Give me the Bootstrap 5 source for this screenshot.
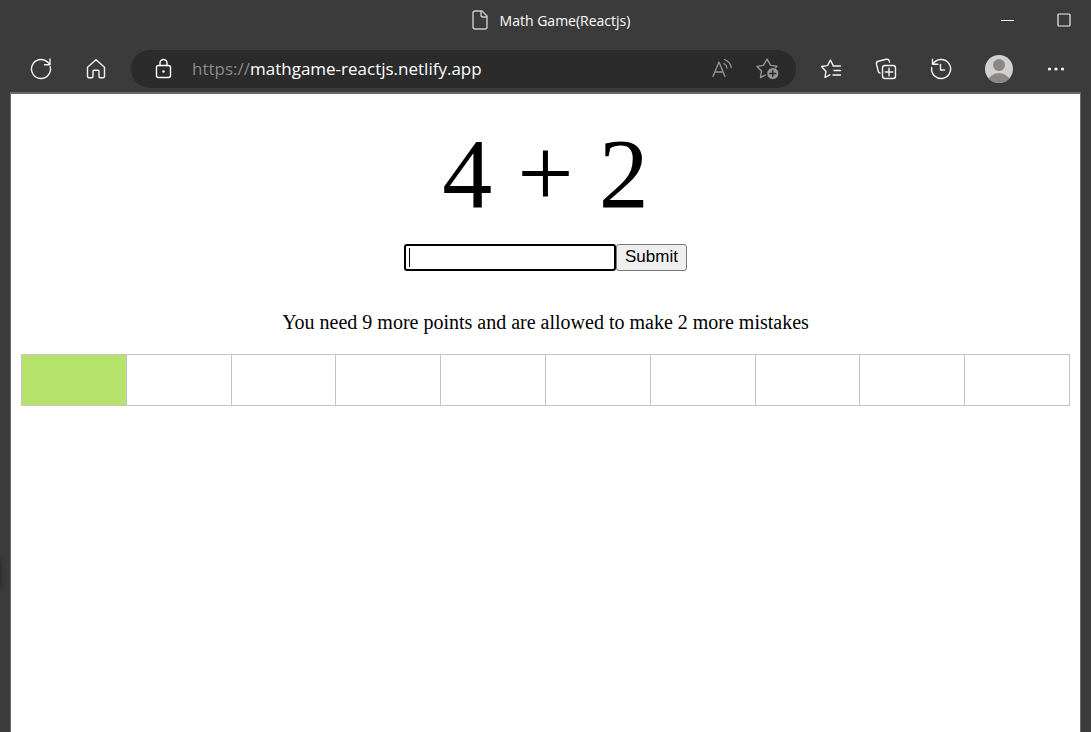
<!DOCTYPE html>
<html lang="en">
<head>
<meta charset="utf-8">
<meta name="viewport" content="width=device-width, initial-scale=1">
<title>Math Game(Reactjs)</title>
<link href="https://cdn.jsdelivr.net/npm/bootstrap@5.3.0/dist/css/bootstrap.min.css" rel="stylesheet">
<style>
  body { background: #3b3b3b; color: #fff; font-family: "Open Sans", "Noto Sans", sans-serif; }
  svg { display: block; fill: none; stroke: currentColor; stroke-width: 1.4; stroke-linecap: round; stroke-linejoin: round; }
  .title-bar { height: 40px; padding-right: 20px; }
  .title-text { font-size: 14px; gap: 12px; padding-left: 31px; }
  .page-icon { color: #ccc; }
  .window-buttons { gap: 42px; }
  .tool-bar { height: 52px; padding: 6px 21px 0 26px; }
  .tool-group { gap: 25px; }
  .tool-button { width: 30px; height: 30px; padding: 0; border: 0; background: none; color: #f2f2f2; display: flex; align-items: center; justify-content: center; }
  .profile { width: 36px; }
  .menu-dots { width: 28px; }
  .address { height: 38px; margin: 0 20px; padding: 0 13px 0 22px; background: #2b2b2b; }
  .address a { font-size: 17px; color: #fff; margin-left: 18px; }
  .address .scheme { color: #8a8a8a; }
  .address .tool-button { color: #969696; }
  .viewport { margin: 0 10px; border: 1px solid #6b6969; border-top-width: 2px; border-bottom: 0; background: #fff; color: #000; padding: 20px 10px; font-family: "Liberation Serif", "Times New Roman", serif; }
  .problem { font-size: 100px; line-height: 120px; }
  .answer-form { margin: 10px 0 36px; font-family: "Liberation Sans", Arial, sans-serif; font-size: 17px; }
  .answer { width: 212px; height: 27px; padding: 2px 4px; border: 2px solid #000; border-radius: 3px; outline: 0; }
  .caret { position: absolute; left: 5px; top: 4px; width: 1px; height: 19px; background: #000; }
  .submit { height: 27px; padding: 0 8px 2px; line-height: 23px; border: 1px solid #767676; border-radius: 3px; background: #efefef; color: #000; }
  .message { font-size: 20px; line-height: 30px; margin-bottom: 17px; }
  .steps { height: 52px; border: 1px solid #c3c3c3; }
  .step + .step { border-left: 1px solid #c3c3c3; }
  .step.done { background: #b5e36b; }
  .edge-shadow { position: absolute; left: -4px; top: 560px; width: 4px; height: 28px; box-shadow: 0 0 5px 0 #222; }
</style>
</head>
<body>
<div class="d-flex flex-column min-vh-100 position-relative overflow-hidden">
  <header>
    <div class="title-bar d-flex align-items-center">
      <div class="col"></div>
      <div class="title-text d-flex align-items-center text-nowrap">
        <svg class="page-icon" width="16" height="20" viewBox="0 0 16 20"><path d="M3 1h7l5 5v11a2 2 0 0 1-2 2H3a2 2 0 0 1-2-2V3a2 2 0 0 1 2-2zM9 1v4a2 2 0 0 0 2 2h4"/></svg>
        <span>Math Game(Reactjs)</span>
      </div>
      <div class="window-buttons col d-flex justify-content-end">
        <button class="tool-button w-auto" aria-label="Minimize"><svg width="15" height="15" viewBox="0 0 15 15"><path d="M1 7.500h13" stroke-width="1" stroke-linecap="butt"/></svg></button>
        <button class="tool-button w-auto" aria-label="Maximize"><svg width="14" height="14" viewBox="0 0 14 14"><rect x="1" y="1" width="12" height="12" rx="1" stroke-width="1.200"/></svg></button>
      </div>
    </div>
    <div class="tool-bar d-flex align-items-center">
      <div class="tool-group d-flex">
        <button class="tool-button" aria-label="Refresh"><svg width="24" height="24" viewBox="0 0 24 24"><path d="M21.200 9.600A9.500 9.500 0 1 1 18 4.600l3 3M21 2v5.700h-5.500"/></svg></button>
        <button class="tool-button" aria-label="Home"><svg width="22" height="22" viewBox="0 0 22 22"><path d="M2.500 9.300 11 1.800l8.500 7.500v9a1.500 1.500 0 0 1-1.500 1.500h-2.500a1.500 1.500 0 0 1-1.500-1.500v-5a1 1 0 0 0-1-1H9a1 1 0 0 0-1 1v5a1.500 1.500 0 0 1-1.500 1.500H4a1.500 1.500 0 0 1-1.500-1.500z"/></svg></button>
      </div>
      <div class="address rounded-pill flex-grow-1 d-flex align-items-center">
        <svg width="21" height="22" viewBox="0 0 21 22"><rect x="3.500" y="7.500" width="14" height="12" rx="2"/><path d="M7 7.500V5a3.500 3.500 0 0 1 7 0v2.500"/><circle cx="10.500" cy="13.500" r="1.200" fill="#fff" stroke="none"/></svg>
        <a href="https://mathgame-reactjs.netlify.app" class="text-decoration-none text-nowrap"><span class="scheme">https://</span>mathgame-reactjs.netlify.app</a>
        <div class="ms-auto d-flex gap-3">
          <button class="tool-button" aria-label="Read aloud"><svg width="24" height="24" viewBox="0 0 24 24"><path d="m3 19.500 6-14.500 6 14.500M5 15h8M14 6.500q2.800 1.600 3 4.500M14.500 2.500q6 2.700 6.700 8" stroke-width="1.300"/></svg></button>
          <button class="tool-button" aria-label="Add to favorites"><svg width="24" height="24" viewBox="0 0 24 24"><path d="m9.500 18-5 2.700 1-6.600L1 9.400l6.400-1L11.200 2l3.300 6.400 6.500.8-1.500 1.700"/><circle cx="16.800" cy="16.500" r="5.600" fill="#969696" stroke="none"/><path d="M16.800 13.500v6M13.800 16.500h6" stroke="#2b2b2b"/></svg></button>
        </div>
      </div>
      <div class="tool-group d-flex">
        <button class="tool-button" aria-label="Favorites"><svg width="24" height="24" viewBox="0 0 24 24"><path d="M10.800 17.800 6 20.500l.9-6.200L2.500 9.500l6-.9L11.400 3l2.800 5.600M14 9h7.500M15 13.500h6.500M14 18h7.500"/></svg></button>
        <button class="tool-button" aria-label="Collections"><svg width="24" height="24" viewBox="0 0 24 24"><rect x="8.500" y="8.500" width="13" height="13" rx="2.500"/><path d="M15 11.200v7.600M11.200 15h7.600M6 16.200c-.9-.3-1.500-.9-1.700-1.700L2.500 7.200A2.500 2.500 0 0 1 4.300 4.300l8-2a2.500 2.500 0 0 1 3 1.800l.3 1"/></svg></button>
        <button class="tool-button" aria-label="History"><svg width="24" height="24" viewBox="0 0 24 24"><path d="M2.700 10.500A9.500 9.500 0 1 0 4 7M3.500 2.300v5h5.500M4 7a9.500 9.500 0 0 1 3-3M11.500 7.500v5.500h4"/></svg></button>
        <button class="tool-button profile" aria-label="Profile"><svg width="28" height="28" viewBox="0 0 28 28"><defs><clipPath id="face"><circle cx="14" cy="14" r="14"/></clipPath></defs><g clip-path="url(#face)" stroke="none"><path d="M0 0h28v28H0z" fill="#d2d0ce"/><circle cx="14" cy="10" r="6" fill="#8a8886"/><ellipse cx="14" cy="27" rx="11" ry="9" fill="#8a8886"/></g></svg></button>
        <button class="tool-button menu-dots" aria-label="Settings and more"><svg width="20" height="6" viewBox="0 0 20 6"><g fill="#fff" stroke="none"><circle cx="3.500" cy="3" r="1.600"/><circle cx="10" cy="3" r="1.600"/><circle cx="16.500" cy="3" r="1.600"/></g></svg></button>
      </div>
    </div>
  </header>
  <main class="viewport flex-grow-1">
    <div class="problem text-center">4 + 2</div>
    <form class="answer-form d-flex justify-content-center">
      <div class="position-relative d-flex">
        <input class="answer" type="text" aria-label="Answer" autocomplete="off">
        <span class="caret"></span>
      </div>
      <button class="submit" type="button">Submit</button>
    </form>
    <p class="message text-center">You need 9 more points and are allowed to make 2 more mistakes</p>
    <div class="steps d-flex" role="progressbar" aria-label="Score" aria-valuenow="1" aria-valuemin="0" aria-valuemax="10">
      <div class="step done flex-fill"></div>
      <div class="step flex-fill"></div>
      <div class="step flex-fill"></div>
      <div class="step flex-fill"></div>
      <div class="step flex-fill"></div>
      <div class="step flex-fill"></div>
      <div class="step flex-fill"></div>
      <div class="step flex-fill"></div>
      <div class="step flex-fill"></div>
      <div class="step flex-fill"></div>
    </div>
  </main>
  <div class="edge-shadow"></div>
</div>
<script src="https://cdn.jsdelivr.net/npm/bootstrap@5.3.0/dist/js/bootstrap.bundle.min.js"></script>
</body>
</html>
